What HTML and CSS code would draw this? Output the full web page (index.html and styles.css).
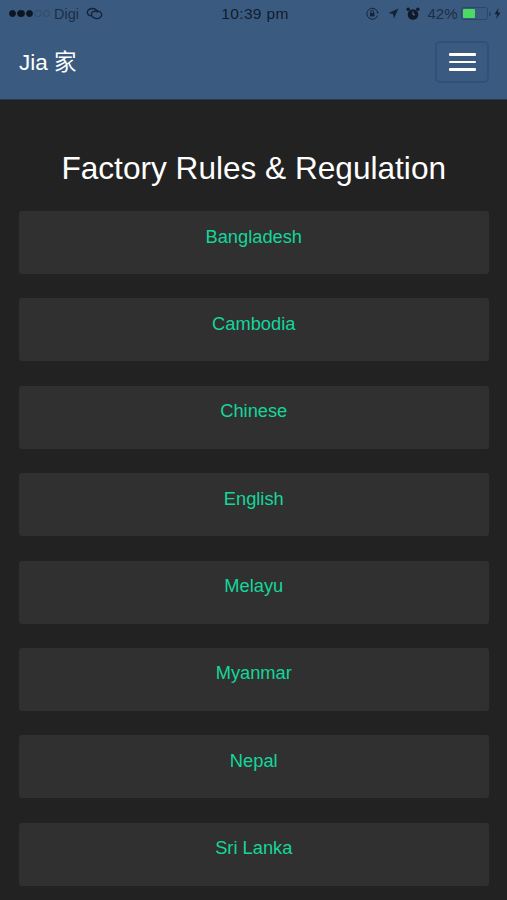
FILE: index.html
```html
<!DOCTYPE html>
<html lang="en">
<head>
<meta charset="utf-8">
<title>Factory Rules &amp; Regulation</title>
<link rel="stylesheet" href="styles.css">
</head>
<body>
<header class="top">
  <div class="status">
    <div class="status-left">
      <span class="signal"><i class="on"></i><i class="on"></i><i class="on"></i><i></i><i></i></span>
      <span class="carrier">Digi</span>
      <svg class="wechat" width="17" height="13" viewBox="0 0 17 13" fill="none" stroke="#14233a" stroke-width="1.4"><path d="M11.500 5.500C11 3 9 1.500 6.500 1.500 3.500 1.500 1.300 3.200 1.300 5.300c0 2 2 3.500 4.700 3.500"/><path d="M5.500 6.500C6 4.800 8 4 10.500 4c3 0 5.200 1.700 5.200 3.800s-2.200 3.800-5.200 3.800C7.500 11.600 5 9 5.500 6.500z"/></svg>
    </div>
    <div class="status-time">10:39 pm</div>
    <div class="status-right">
      <svg width="15" height="14" viewBox="0 0 15 14" fill="none" stroke="#14233a" stroke-width="1"><path d="M12.600 8.500A5.500 5.500 0 1 1 12.600 5"/><path d="M11.500 5h2.500l-1.200 1.800z" fill="#14233a" stroke="none"/><rect x="5" y="6" width="4.400" height="3.400" fill="#14233a" stroke="none"/><path d="M5.800 6V4.800a1.400 1.400 0 0 1 2.800 0V6"/></svg>
      <svg class="gap-arrow" width="11" height="11" viewBox="0 0 11 11"><path d="M10.500.5 6 10.500 5 6 .5 5z" fill="#14233a"/></svg>
      <svg class="gap-alarm" width="14" height="14" viewBox="0 0 14 14"><circle cx="7" cy="7.500" r="5.300" fill="#10192a"/><circle cx="2.200" cy="2.300" r="1.700" fill="#10192a"/><circle cx="11.800" cy="2.300" r="1.700" fill="#10192a"/><path d="M7 4.500v3.300h2" stroke="#5a7596" fill="none"/></svg>
      <span class="pct">42%</span>
      <span class="battery"><span class="level"></span></span>
      <span class="nub"></span>
      <svg class="bolt" width="7" height="11" viewBox="0 0 7 11"><path d="M4.500 0 .5 6.300h2.500L2.300 11l4.200-6.500H4z" fill="#14233a"/></svg>
    </div>
  </div>
  <nav class="nav">
    <a class="brand">Jia 家</a>
    <button class="toggle" aria-label="Menu"><span></span><span></span><span></span></button>
  </nav>
</header>
<main class="page">
  <h1 class="title">Factory Rules &amp; Regulation</h1>
  <ul class="list">
    <li class="well">Bangladesh</li>
    <li class="well">Cambodia</li>
    <li class="well">Chinese</li>
    <li class="well">English</li>
    <li class="well">Melayu</li>
    <li class="well">Myanmar</li>
    <li class="well">Nepal</li>
    <li class="well">Sri Lanka</li>
  </ul>
</main>
</body>
</html>
```
FILE: styles.css
```css
* { box-sizing: border-box; }
html, body { margin: 0; height: 900px; overflow: hidden; }
body { background: #222222; font-family: "Liberation Sans", "Noto Sans CJK SC", sans-serif; color: #fff; }
.top { height: 100px; background: #3a5b7f; border-bottom: 1px solid #2c3a48; }
.status { height: 27px; padding: 0 6px 0 9px; display: grid; grid-template-columns: 1fr auto 1fr; align-items: center; font-size: 14px; color: #14233a; }
.status-left { display: flex; align-items: center; gap: 4px; color: #1d2d44; }
.signal { display: flex; gap: 1px; }
.signal i { width: 7.400px; height: 7.400px; border-radius: 50%; border: 1px solid #2e4a6b; }
.signal i.on { background: #0e1522; border-color: #0e1522; }
.carrier { font-size: 14.500px; }
.wechat { margin-left: 3px; }
.status-time { font-size: 15.500px; color: #101c30; letter-spacing: .35px; }
.status-right { display: flex; align-items: center; justify-content: flex-end; }
.gap-arrow { margin-left: 8px; }
.gap-alarm { margin-left: 7px; }
.pct { margin-left: 7px; color: #1d2d44; font-size: 15px; }
.battery { margin-left: 3px; width: 27px; height: 13px; border: 1px solid #2a4868; border-radius: 3px; padding: 1px; display: flex; }
.level { width: 12px; background: #4cd964; border-radius: 1px; }
.nub { width: 2px; height: 4px; margin-left: 1px; background: #2a4868; border-radius: 0 1px 1px 0; }
.bolt { margin-left: 3.500px; }
.nav { height: 72px; padding: 0 18px 0 19px; display: flex; align-items: center; justify-content: space-between; }
.brand { font-size: 22.500px; color: #fff; position: relative; top: -3px; }
.toggle { width: 54px; height: 42px; background: #3a5b7f; border: 2px solid #31507a; border-radius: 5px; padding: 0; display: flex; flex-direction: column; align-items: center; justify-content: center; gap: 5px; position: relative; top: -1px; }
.toggle span { width: 27px; height: 2.500px; background: #fff; border-radius: 1px; }
.page { padding: 0 18.500px 0 19px; }
.title { margin: 0; padding-top: 50px; height: 111px; text-align: center; font-size: 31.600px; font-weight: 400; line-height: 37px; color: #fff; }
.list { list-style: none; margin: 0; padding: 0; display: flex; flex-direction: column; gap: 24.400px; }
.well { height: 63px; background: #303030; border-radius: 3px; padding-top: 13.500px; text-align: center; font-size: 18.300px; line-height: 24px; color: #14d69b; }
```
